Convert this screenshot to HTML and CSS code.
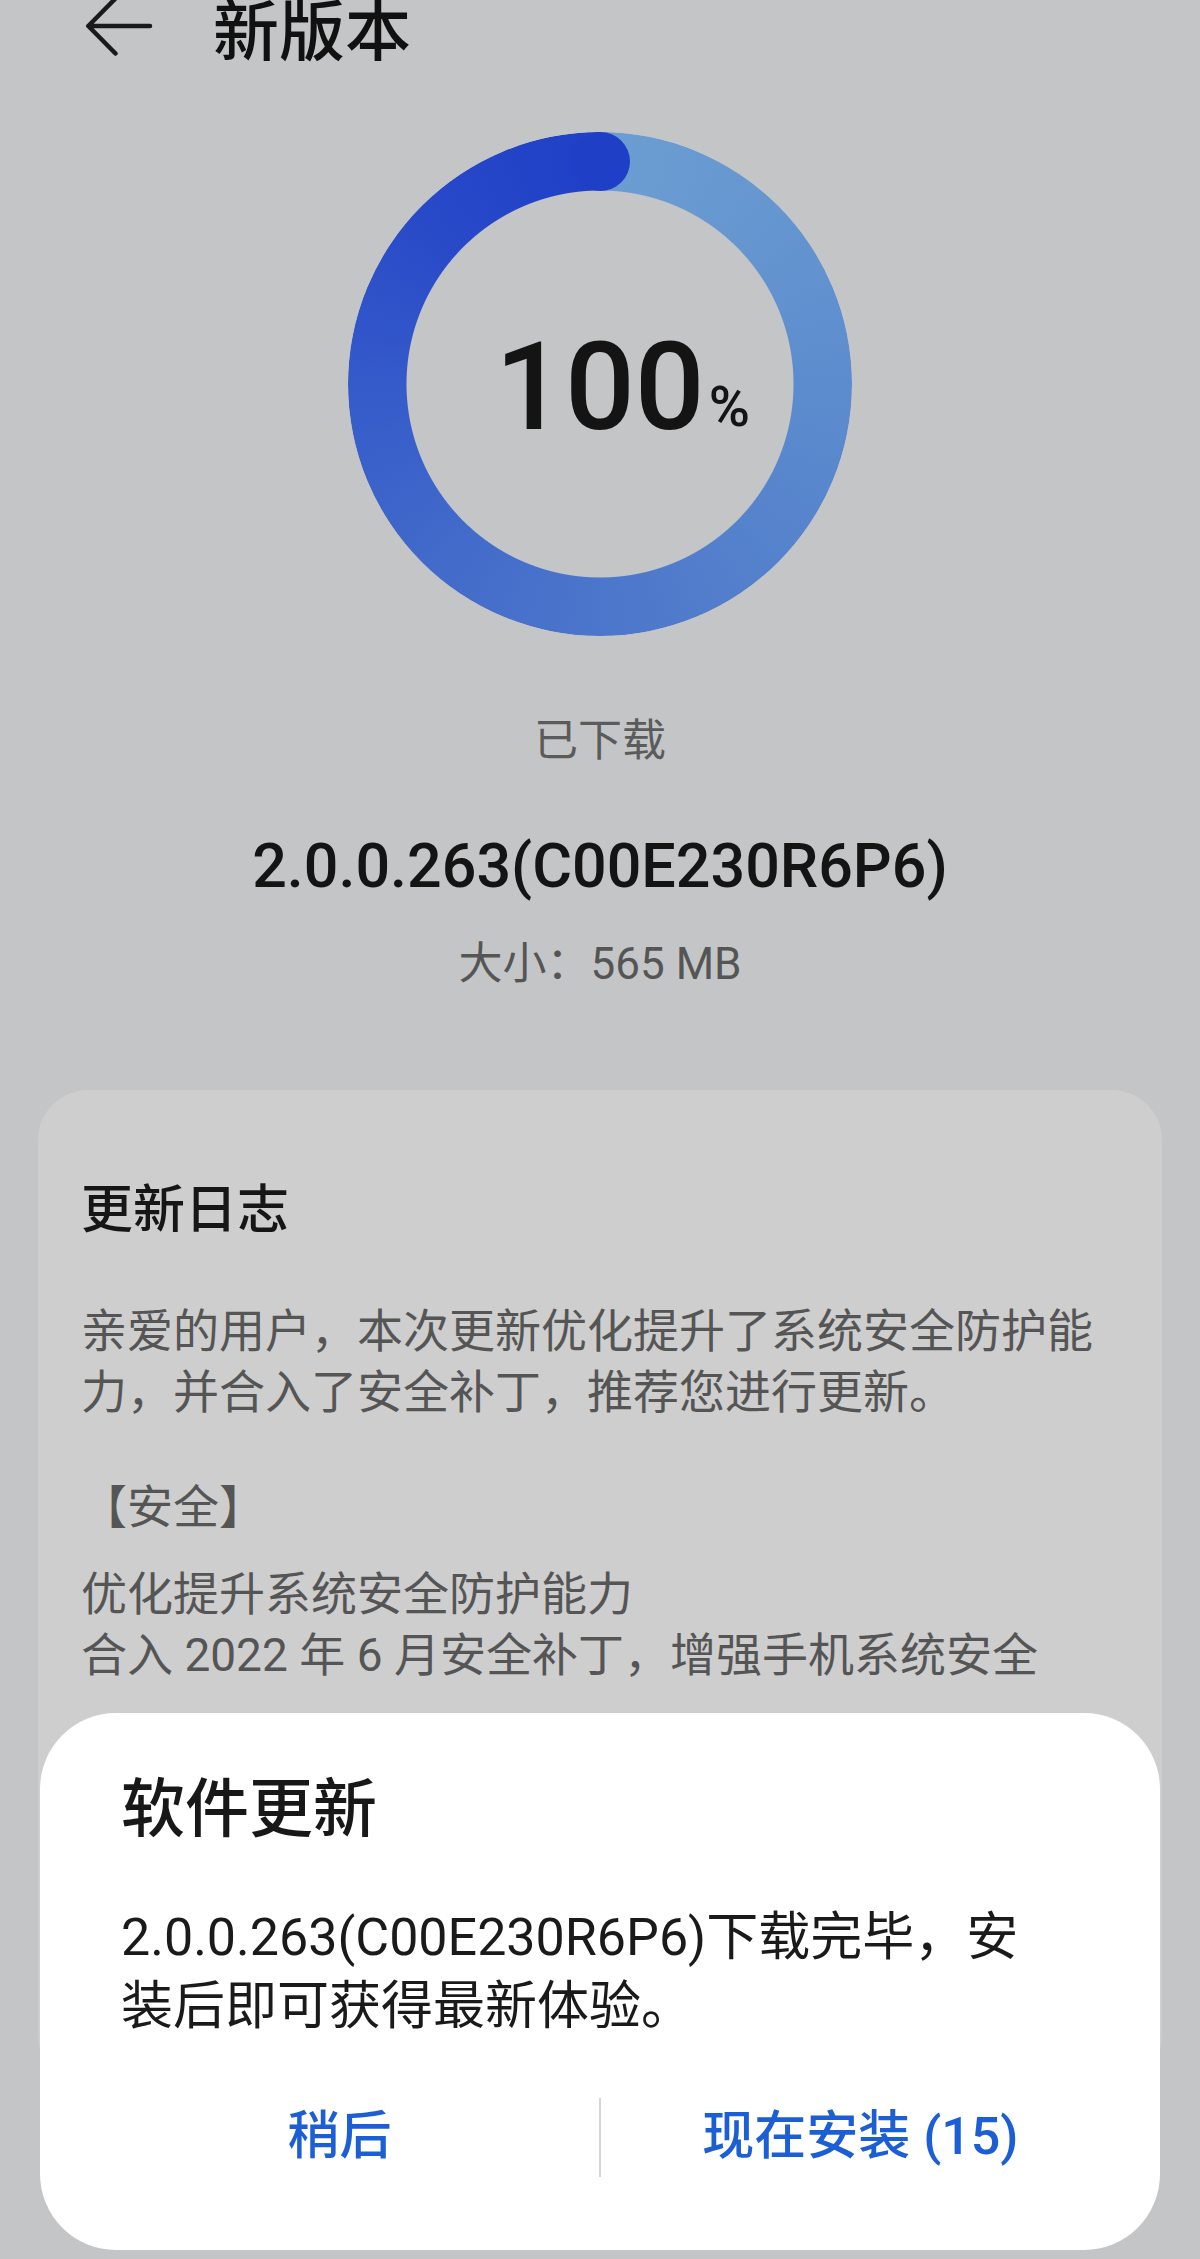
FILE: index.html
```html
<!DOCTYPE html>
<html lang="zh-CN">
<head>
  <meta charset="UTF-8">
  <meta name="viewport" content="width=device-width, initial-scale=1.0">
  <title>新版本</title>
  <link rel="stylesheet" href="styles.css">
</head>
<body>
  <div id="page">
    <!-- 顶部栏 -->
    <header class="topbar">
      <a href="#" class="back">
        <svg width="80" height="66" viewBox="0 0 80 66">
          <path d="M35.5 -1.5 L8.3 26 L35.5 53.5 M8.3 26 H70" fill="none" stroke="#1a1a1a" stroke-width="4.5" stroke-linecap="round" stroke-linejoin="round"/>
        </svg>
      </a>
      <h1 class="title">新版本</h1>
    </header>

    <!-- 进度环 -->
    <div class="ring">
      <p class="percent">100<span class="sign">%</span></p>
    </div>
    <p class="status">已下载</p>
    <p class="version">2.0.0.263(C00E230R6P6)</p>
    <p class="size">大小：565 MB</p>

    <!-- 更新日志 -->
    <section class="log">
      <h2 class="log-title">更新日志</h2>
      <p class="log-intro">亲爱的用户，本次更新优化提升了系统安全防护能力，并合入了安全补丁，推荐您进行更新。</p>
      <p class="log-sub">【安全】</p>
      <ul class="log-list">
        <li>优化提升系统安全防护能力</li>
        <li>合入 2022 年 6 月安全补丁，增强手机系统安全</li>
      </ul>
    </section>

    <!-- 弹窗 -->
    <div class="dialog">
      <h3 class="dialog-title">软件更新</h3>
      <p class="dialog-msg">2.0.0.263(C00E230R6P6)下载完毕，安装后即可获得最新体验。</p>
      <div class="dialog-btns">
        <a href="#">稍后</a>
        <span class="divider"></span>
        <a href="#">现在安装 (15)</a>
      </div>
    </div>
  </div>
</body>
</html>
```

FILE: styles.css
```css
/* reset */
* {
  margin: 0;
  padding: 0;
  box-sizing: border-box;
}
ul, li {
  list-style: none;
}
body {
  background: #c4c5c7;
  font-family: Roboto, "Noto Sans CJK SC", sans-serif;
  color: #151515;
}
#page {
  position: relative;
  width: 1200px;
  height: 2259px;
  overflow: hidden;
}

/* 顶部栏 */
.topbar {
  display: flex;
  align-items: flex-start;
  height: 66px;
  padding-left: 80px;
}
.back {
  display: block;
  width: 80px;
  height: 66px;
}
.back svg {
  display: block;
}
.title {
  margin-left: 53px;
  font-size: 66px;
  line-height: 66px;
  font-weight: 500;
  color: #111;
}

/* 进度环 */
.ring {
  position: relative;
  width: 504px;
  height: 504px;
  margin: 66px auto 0;
  display: flex;
  align-items: center;
  justify-content: center;
}
.ring::before {
  content: "";
  position: absolute;
  inset: 0;
  border-radius: 50%;
  background: conic-gradient(#6c9ed2 0deg, #6596d0 45deg, #5d8cce 90deg, #5582cc 135deg, #4c76cb 180deg, #416aca 225deg, #355aca 270deg, #2849c8 315deg, #1f3fc7 360deg);
  -webkit-mask: radial-gradient(farthest-side, transparent calc(100% - 59px), #000 calc(100% - 58px));
  mask: radial-gradient(farthest-side, transparent calc(100% - 59px), #000 calc(100% - 58px));
}
/* 进度条圆头 */
.ring::after {
  content: "";
  position: absolute;
  top: 0;
  left: 223px;
  width: 59px;
  height: 59px;
  border-radius: 50%;
  background: #1f3fc7;
}
.percent {
  padding-top: 27px;
  font-size: 123px;
  line-height: 123px;
  font-weight: 500;
  color: #141414;
}
.sign {
  margin-left: 4px;
  margin-right: -45px;
  font-size: 56px;
  vertical-align: 3px;
}

.status {
  margin-top: 75px;
  font-size: 44px;
  line-height: 60px;
  text-align: center;
  color: #5b5b5b;
}
.version {
  margin-top: 55px;
  font-size: 61px;
  line-height: 80px;
  font-weight: 500;
  text-align: center;
  color: #141414;
}
.size {
  margin-top: 28px;
  font-size: 44px;
  line-height: 60px;
  text-align: center;
  color: #555;
}

/* 更新日志 */
.log {
  margin: 96px 38px 0;
  padding: 86px 43px 400px;
  background: #cecece;
  border-radius: 50px;
}
.log-title {
  font-size: 52px;
  line-height: 70px;
  font-weight: 500;
  color: #161616;
}
.log-intro {
  margin-top: 55px;
  font-size: 46px;
  line-height: 61px;
  color: #555;
}
.log-sub {
  margin-top: 54px;
  font-size: 46px;
  line-height: 61px;
  color: #555;
}
.log-list {
  margin-top: 26px;
  font-size: 46px;
  line-height: 61px;
  color: #555;
}

/* 弹窗 */
.dialog {
  position: absolute;
  left: 40px;
  right: 40px;
  bottom: 9px;
  padding-top: 57px;
  background: #fff;
  border-radius: 76px;
}
.dialog-title {
  padding: 0 81px;
  font-size: 64px;
  line-height: 80px;
  font-weight: 500;
  color: #181818;
}
.dialog-msg {
  margin-top: 53px;
  padding: 0 110px 0 81px;
  font-size: 52px;
  line-height: 69px;
  color: #1a1a1a;
}
.dialog-btns {
  display: flex;
  align-items: center;
  margin-top: 56px;
  padding: 0 40px 73px;
}
.dialog-btns a {
  flex: 1;
  text-align: center;
  font-size: 52px;
  line-height: 80px;
  font-weight: 500;
  color: #1c5ed4;
  text-decoration: none;
}
.divider {
  width: 1.5px;
  height: 79px;
  background: #d4d4d4;
}
```
